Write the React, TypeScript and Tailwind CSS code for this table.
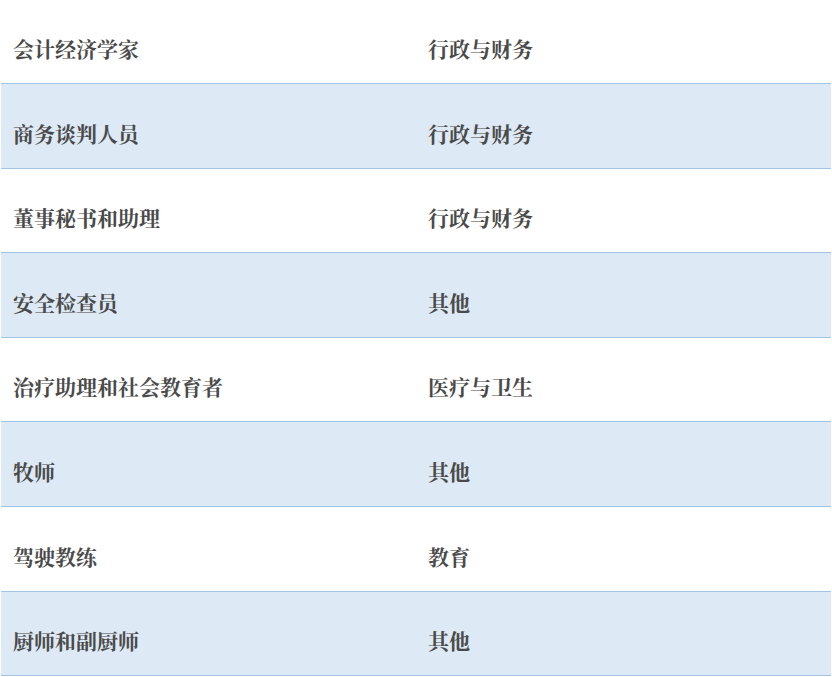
const rows: [string, string][] = [
  ['会计经济学家', '行政与财务'],
  ['商务谈判人员', '行政与财务'],
  ['董事秘书和助理', '行政与财务'],
  ['安全检查员', '其他'],
  ['治疗助理和社会教育者', '医疗与卫生'],
  ['牧师', '其他'],
  ['驾驶教练', '教育'],
  ['厨师和副厨师', '其他'],
];

export default function App() {
  return (
    <div
      className="bg-white w-[832px] h-[677px] overflow-hidden"
      style={{ fontFamily: '"Noto Serif CJK SC", "Liberation Serif", serif' }}
    >
      <div className="ml-px w-[830px] -mt-[0.6px]">
        {rows.map(([job, sector], i) => (
          <div
            key={i}
            className={`grid grid-cols-2 h-[84.6px] border-b border-[#a3c4e4] pt-[15px] items-center text-[21px] font-bold text-[#4a4a4a] ${
              i % 2 === 1 ? 'bg-[#dde9f5]' : 'bg-white'
            }`}
          >
            <div className="pl-3">{job}</div>
            <div className="pl-3">{sector}</div>
          </div>
        ))}
      </div>
    </div>
  );
}
